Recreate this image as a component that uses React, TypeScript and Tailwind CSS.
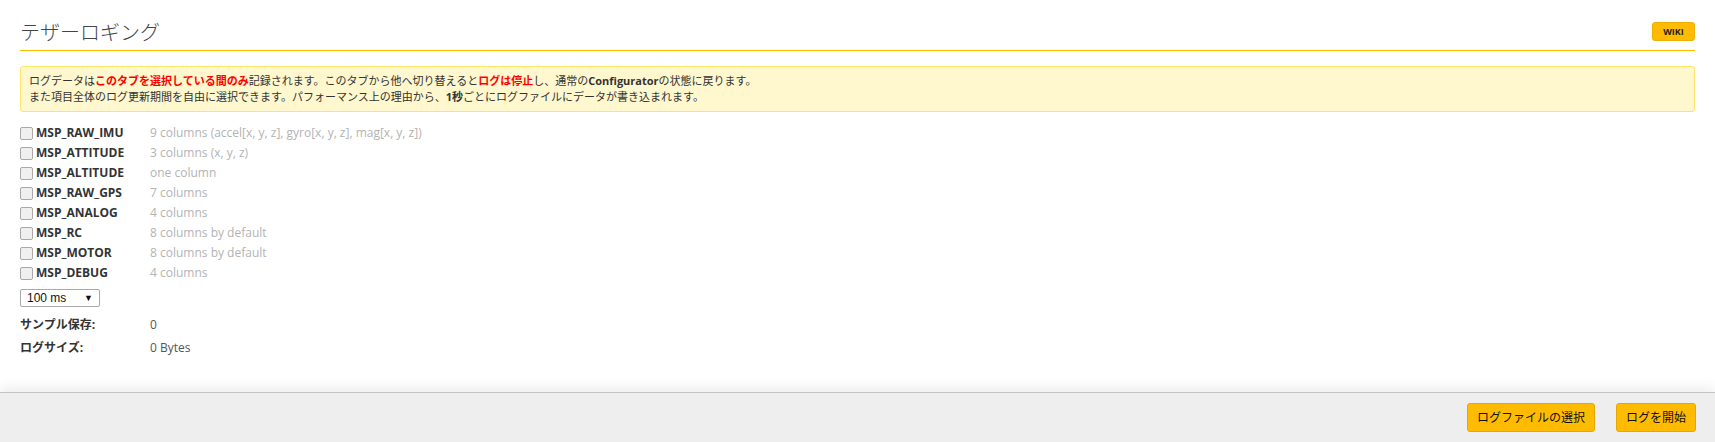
import React, { useState } from 'react';

const logItems = [
  { name: 'MSP_RAW_IMU', desc: '9 columns (accel[x, y, z], gyro[x, y, z], mag[x, y, z])' },
  { name: 'MSP_ATTITUDE', desc: '3 columns (x, y, z)' },
  { name: 'MSP_ALTITUDE', desc: 'one column' },
  { name: 'MSP_RAW_GPS', desc: '7 columns' },
  { name: 'MSP_ANALOG', desc: '4 columns' },
  { name: 'MSP_RC', desc: '8 columns by default' },
  { name: 'MSP_MOTOR', desc: '8 columns by default' },
  { name: 'MSP_DEBUG', desc: '4 columns' },
];

const font = { fontFamily: '"Open Sans", "Noto Sans CJK JP", sans-serif' };

export default function App() {
  const [checked, setChecked] = useState<Record<string, boolean>>({});

  return (
    <div className="h-[442px] w-full flex flex-col bg-white text-[#333]" style={font}>
      {/* 本体 */}
      <div className="flex-1 px-5">
        <div className="flex items-end justify-between h-[51px] border-b border-[#ffbb00] pb-[3px]">
          <h1 className="text-[20px] leading-[28px] font-light text-[#444]">テザーロギング</h1>
          <button className="mb-[6px] h-[19px] w-[43px] rounded-[3px] bg-[#ffbb00] border border-[#f0ae00] text-[9px] font-bold text-[#222] leading-none">
            WIKI
          </button>
        </div>

        <div className="mt-[15px] rounded-[3px] border border-[#ffe56a] bg-[#fff7cd] px-2 py-[6px] text-[11px] leading-[16px] text-[#333]">
          <p>
            ログデータは<span className="font-bold text-[#ff0000]">このタブを選択している間のみ</span>
            記録されます。このタブから他へ切り替えると<span className="font-bold text-[#ff0000]">ログは停止</span>
            し、通常の<span className="font-bold">Configurator</span>の状態に戻ります。
          </p>
          <p>
            また項目全体のログ更新期間を自由に選択できます。パフォーマンス上の理由から、<span className="font-bold">1秒</span>
            ごとにログファイルにデータが書き込まれます。
          </p>
        </div>

        <div className="mt-[11px] flex flex-col">
          {logItems.map((item) => (
            <label key={item.name} className="flex items-center h-5 text-[12px]">
              <input
                type="checkbox"
                checked={!!checked[item.name]}
                onChange={() => setChecked({ ...checked, [item.name]: !checked[item.name] })}
                className="appearance-none w-[13px] h-[13px] rounded-[2px] border border-[#a9a9a9] bg-[#efefef] mr-[3px]"
              />
              <span className="w-[114px] font-bold text-[#333]">{item.name}</span>
              <span className="text-[#b3b3b3]">{item.desc}</span>
            </label>
          ))}
        </div>

        <div className="mt-[6px] relative w-[80px] h-[18px] border border-[#a9a9a9] rounded-[2px] bg-white flex items-center pl-[6px] text-[12px] text-[#111]" style={{ fontFamily: '"Liberation Sans", Arial, sans-serif' }}>
          100 ms
          <span className="absolute right-[6px] top-[2px] text-[9px]">▼</span>
        </div>

        <div className="mt-[8px] flex flex-col gap-[3px] text-[12px]">
          <div className="flex items-center h-5">
            <span className="w-[130px] font-bold text-[#333]">サンプル保存:</span>
            <span className="text-[#555]">0</span>
          </div>
          <div className="flex items-center h-5">
            <span className="w-[130px] font-bold text-[#333]">ログサイズ:</span>
            <span className="text-[#555]">0 Bytes</span>
          </div>
        </div>
      </div>

      {/* フッター */}
      <div className="h-[50px] bg-[#eeeeee] border-t border-[#c4c4c4] shadow-[0_-6px_10px_rgba(0,0,0,0.06)] flex items-center justify-end gap-[21px] pr-[19px]">
        <button className="h-[29px] px-[9px] rounded-[3px] bg-[#ffbb00] border border-[#e5a800] text-[12px] text-[#111]">
          ログファイルの選択
        </button>
        <button className="h-[29px] px-[9px] rounded-[3px] bg-[#ffbb00] border border-[#e5a800] text-[12px] text-[#111]">
          ログを開始
        </button>
      </div>
    </div>
  );
}
